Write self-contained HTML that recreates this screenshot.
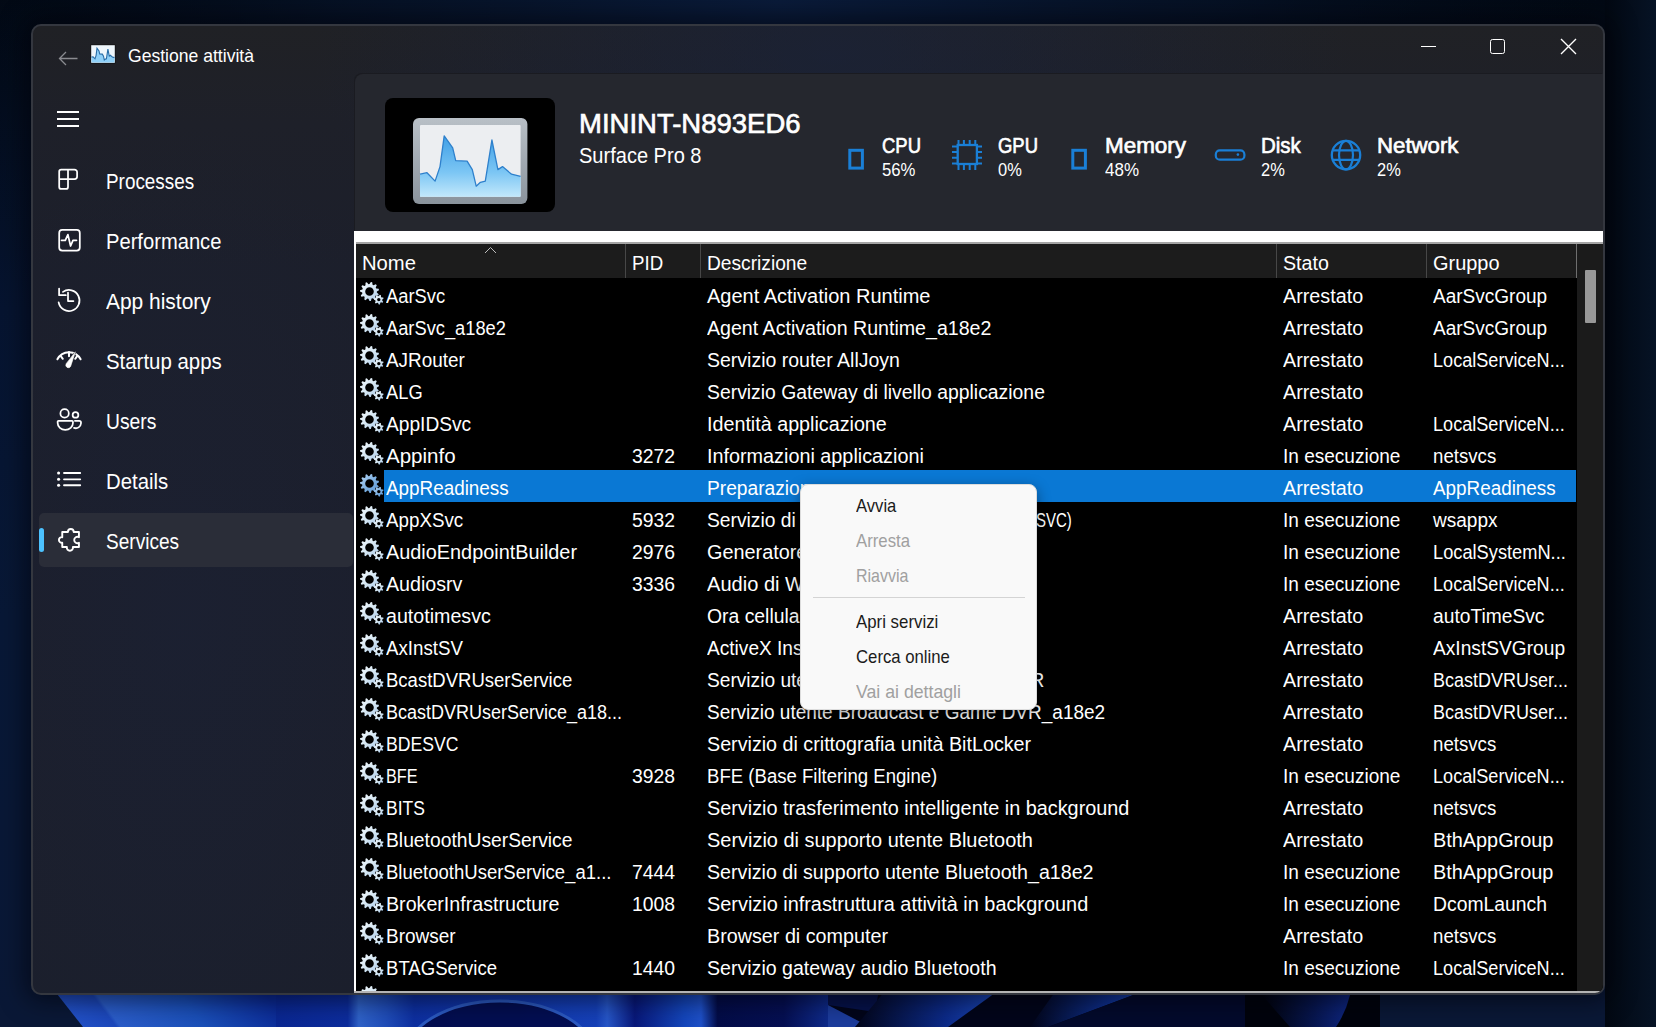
<!DOCTYPE html>
<html><head><meta charset="utf-8">
<style>
*{margin:0;padding:0;box-sizing:border-box}
html,body{width:1656px;height:1027px;overflow:hidden}
body{position:relative;font-family:"Liberation Sans",sans-serif;color:#fff;background:#040c1c}
.abs{position:absolute}
#win{position:absolute;left:31px;top:24px;width:1574px;height:971px;border-radius:10px;background:radial-gradient(ellipse 520px 260px at 800px 30px,rgba(24,34,62,.55),rgba(24,34,62,0)),radial-gradient(ellipse 260px 500px at 150px 600px,rgba(26,34,58,.35),rgba(26,34,58,0)),linear-gradient(180deg,#202125 0%,#1e2029 10%,#1c1f2b 25%,#1c1f2c 60%,#1b1f2c 100%);border:2px solid #34373f;overflow:hidden;box-shadow:0 0 24px 6px rgba(0,2,8,.55)}
#panel{position:absolute;left:322px;top:48px;width:1248px;height:919px;background:#25272e;border-top-left-radius:8px;box-shadow:-1px -1px 0 #1a1b21}
.t{position:absolute;white-space:nowrap;line-height:1}
.sb{-webkit-text-stroke:0.65px #fff}
#list{position:absolute;left:354px;top:231px;width:1249px;height:762px;background:#000;overflow:hidden;border-bottom-right-radius:8px}
#list .wbar{position:absolute;left:0;top:0;width:1249px;height:11px;background:#fff}
#list .lbar{position:absolute;left:0;top:0;width:2px;height:762px;background:#fff}
#list .bbar{position:absolute;left:0;top:760px;width:1249px;height:2px;background:#b4b4b4}
#hdr{position:absolute;left:2px;top:13px;width:1220px;height:34px;background:#1c1c1c}
.hc{position:absolute;top:9px;font-size:20px;line-height:1;color:#fff;white-space:nowrap;transform-origin:0 0}
.sep{position:absolute;top:0;width:1px;height:34px;background:#474747}
.row{position:absolute;left:0;width:1222px;height:32px}
.row .c{position:absolute;top:8px;font-size:20px;line-height:1;color:#fff;white-space:nowrap;transform-origin:0 0}
.row .g{position:absolute;left:6px;top:4px}
.selbg{position:absolute;left:30px;top:0;width:1192px;height:32px;background:#0a78d4}
#sb{position:absolute;left:1223px;top:13px;width:26px;height:747px;background:#1b1b1b}
#thumb{position:absolute;left:8px;top:26px;width:11px;height:53px;background:#989898;border-radius:1px}
#menu{position:absolute;left:800px;top:484px;width:237px;height:226px;background:#f9f9f9;border-radius:8px;border:1px solid #dcdcdc;box-shadow:0 4px 14px rgba(0,0,0,.4)}
.t.mi{color:#1b1b1b}
.t.mi.dis{color:#a0a0a0}
</style></head><body>
<svg width="0" height="0" style="position:absolute"><defs>
<linearGradient id="gg" x1="0" y1="0" x2="1" y2="1"><stop offset="0" stop-color="#f4f9fc"/><stop offset=".55" stop-color="#d2e5f2"/><stop offset="1" stop-color="#a8c8ea"/></linearGradient>
<linearGradient id="gs" x1="0" y1="0" x2="1" y2="1"><stop offset="0" stop-color="#b7d6f2"/><stop offset=".55" stop-color="#7aaee0"/><stop offset="1" stop-color="#5a96d6"/></linearGradient>
<linearGradient id="cf" x1="0" y1="0" x2="0" y2="1"><stop offset="0" stop-color="#3f9fe6"/><stop offset=".6" stop-color="#7cc6f4"/><stop offset="1" stop-color="#c2e8fb"/></linearGradient>
<linearGradient id="fr" x1="0" y1="0" x2="0" y2="1"><stop offset="0" stop-color="#b9c0c7"/><stop offset="1" stop-color="#8a939c"/></linearGradient>
</defs></svg>
<!-- desktop background -->
<svg class="abs" style="left:0;top:0" width="1656" height="1027" viewBox="0 0 1656 1027">
 <defs>
  <linearGradient id="bgv" x1="0" y1="0" x2="0" y2="1027" gradientUnits="userSpaceOnUse"><stop offset="0" stop-color="#020914"/><stop offset=".3" stop-color="#061430"/><stop offset=".6" stop-color="#081836"/><stop offset="1" stop-color="#0a1836"/></linearGradient>
  <radialGradient id="topg" cx="780" cy="0" r="820" gradientUnits="userSpaceOnUse"><stop offset="0" stop-color="#0a1b3a" stop-opacity="1"/><stop offset=".55" stop-color="#07142b" stop-opacity=".7"/><stop offset="1" stop-color="#040c1c" stop-opacity="0"/></radialGradient>
  <linearGradient id="rightg" x1="1605" y1="0" x2="1656" y2="0" gradientUnits="userSpaceOnUse"><stop offset="0" stop-color="#020812"/><stop offset="1" stop-color="#061325"/></linearGradient>
  <linearGradient id="bA" x1="57" y1="0" x2="276" y2="0" gradientUnits="userSpaceOnUse" gradientTransform="translate(0,1006) skewX(37) translate(0,-1006)">
   <stop offset="0" stop-color="#2352c8"/><stop offset=".2" stop-color="#1c48bc"/><stop offset=".22" stop-color="#2a5cc8"/><stop offset=".6" stop-color="#1a4fb8"/><stop offset="1" stop-color="#0b2a96"/>
  </linearGradient>
  <linearGradient id="bB" x1="276" y1="0" x2="828" y2="0" gradientUnits="userSpaceOnUse">
   <stop offset="0" stop-color="#0a2792"/><stop offset=".13" stop-color="#0c2c9c"/><stop offset=".15" stop-color="#2f62c8"/><stop offset=".2" stop-color="#1f4cb8"/><stop offset=".25" stop-color="#0d2fa0"/>
   <stop offset=".58" stop-color="#1540b8"/><stop offset=".6" stop-color="#2656c8"/><stop offset=".65" stop-color="#08187a"/><stop offset=".74" stop-color="#1446bc"/><stop offset=".77" stop-color="#1e50c8"/>
   <stop offset=".8" stop-color="#030c48"/><stop offset=".92" stop-color="#050f52"/><stop offset="1" stop-color="#0e2a8a"/>
  </linearGradient>
  <linearGradient id="bC" x1="828" y1="0" x2="1380" y2="0" gradientUnits="userSpaceOnUse" gradientTransform="translate(0,1006) skewX(-50) translate(0,-1006)">
   <stop offset="0" stop-color="#0a2a90"/><stop offset=".06" stop-color="#01030e"/><stop offset=".2" stop-color="#000208"/><stop offset=".27" stop-color="#1c48c0"/><stop offset=".31" stop-color="#000208"/>
   <stop offset=".38" stop-color="#02061a"/><stop offset=".47" stop-color="#1a48c0"/><stop offset=".55" stop-color="#0f3098"/><stop offset=".62" stop-color="#030a30"/><stop offset=".75" stop-color="#000208"/>
   <stop offset=".84" stop-color="#0f2a90"/><stop offset=".93" stop-color="#000206"/><stop offset="1" stop-color="#02060e"/>
  </linearGradient>
 <linearGradient id="bBand" x1="0" y1="0" x2="1" y2="0"><stop offset="0" stop-color="#02051a"/><stop offset=".6" stop-color="#0c2a88"/><stop offset="1" stop-color="#1e4ec4"/></linearGradient>
  <linearGradient id="bBand2" x1="0" y1="0" x2="1" y2="0"><stop offset="0" stop-color="#02051a"/><stop offset=".6" stop-color="#0e3090"/><stop offset="1" stop-color="#2252c0"/></linearGradient>
  <radialGradient id="bBlob" cx=".3" cy=".6" r=".75"><stop offset="0" stop-color="#01030c"/><stop offset=".6" stop-color="#0a1f70"/><stop offset=".9" stop-color="#102c90"/><stop offset="1" stop-color="#01030c" stop-opacity="0"/></radialGradient>
  <linearGradient id="bBlob2" x1="0" y1="0" x2="1" y2="0"><stop offset="0" stop-color="#01030c"/><stop offset=".6" stop-color="#071650"/><stop offset="1" stop-color="#0e2680"/></linearGradient>
 </defs>
 <rect x="0" y="0" width="1656" height="1027" fill="url(#bgv)"/>
 <rect x="0" y="0" width="1656" height="1027" fill="url(#topg)"/>
 <rect x="1605" y="0" width="51" height="1027" fill="url(#rightg)"/>
 <polygon points="50,985 276,985 276,1027 83,1027" fill="url(#bA)"/>
 <rect x="276" y="985" width="552" height="42" fill="url(#bB)"/>
 <ellipse cx="500" cy="1060" rx="97" ry="59" fill="#020a48" stroke="#2f5ec4" stroke-width="3" opacity=".9"/>
 <rect x="828" y="985" width="552" height="42" fill="#02051a"/>
 <polygon points="828,985 880,985 875,1012 828,1005" fill="#06124a"/>
 <polygon points="828,1005 870,1027 828,1027" fill="#1c3c9c"/>
 <polygon points="890,985 1006,985 948,1027 855,1027" fill="url(#bBand)"/>
 <polygon points="1060,985 1160,985 1048,1027 1030,1027" fill="url(#bBand2)"/>
 <polygon points="1160,985 1245,985 1245,1027 1048,1027" fill="#030a2c"/>
 <polygon points="1245,985 1380,985 1380,1027 1245,1027" fill="#01030c"/>
 <path d="M1262,995 L1350,995 Q1346,1012 1336,1027 L1290,1027 Z" fill="url(#bBlob2)"/>
</svg>
<div id="win">
  <div id="panel"></div>
</div>
<!-- title bar -->
<svg class="abs" style="left:58px;top:50px" width="20" height="17" viewBox="0 0 20 17"><path d="M19.5,8.5 H1.5 M8,2 L1.5,8.5 L8,15" fill="none" stroke="#8a8b90" stroke-width="1.3"/></svg>
<svg class="abs" style="left:90px;top:44px" width="26" height="20" viewBox="0 0 26 20"><rect x="0.5" y="0.5" width="25" height="19" fill="#111"/><rect x="1.2" y="1.2" width="23.6" height="17.6" fill="#eef6fc"/><g transform="translate(1.5,1.5)"><path d="M0.0,11.6 L1.6,11.3 L3.5,13.3 L4.6,9.8 L5.5,2.6 L7.5,5.4 L8.2,8.4 L10.8,8.6 L12.0,10.6 L12.8,14.5 L13.8,13.6 L14.9,13.3 L16.4,3.6 L17.8,10.6 L18.9,9.8 L20.9,11.6 L23.0,12.1 L23.0,17 L0.0,17Z" fill="#8fd0f8"/><path d="M0.0,11.6 L1.6,11.3 L3.5,13.3 L4.6,9.8 L5.5,2.6 L7.5,5.4 L8.2,8.4 L10.8,8.6 L12.0,10.6 L12.8,14.5 L13.8,13.6 L14.9,13.3 L16.4,3.6 L17.8,10.6 L18.9,9.8 L20.9,11.6 L23.0,12.1" fill="none" stroke="#2a6ea8" stroke-width="1.1"/></g></svg>
<div class="t " style="left:127.5px;top:46.75px;font-size:18.60px;transform:scaleX(0.945);transform-origin:0 0;">Gestione attività</div>
<div class="abs" style="left:1421px;top:46px;width:15px;height:1px;background:#fff"></div>
<div class="abs" style="left:1490px;top:39px;width:15px;height:15px;border:1.4px solid #fff;border-radius:2.5px"></div>
<svg class="abs" style="left:1560px;top:38px" width="17" height="17" viewBox="0 0 17 17"><path d="M1,1 L16,16 M16,1 L1,16" stroke="#fff" stroke-width="1.35"/></svg>
<!-- hamburger -->
<div class="abs" style="left:57px;top:111px;width:22px;height:1.6px;background:#fff"></div>
<div class="abs" style="left:57px;top:118px;width:22px;height:1.6px;background:#fff"></div>
<div class="abs" style="left:57px;top:125px;width:22px;height:1.6px;background:#fff"></div>
<!-- nav -->
<div class="abs" style="left:39px;top:513px;width:314px;height:54px;background:#2a2d38;border-radius:5px"></div>
<div class="abs" style="left:39px;top:528px;width:5px;height:24px;background:#4cc2ff;border-radius:3px"></div>
<svg class="abs" style="left:54px;top:165px" width="30" height="400" viewBox="0 0 30 400" fill="none" stroke="#fff" stroke-width="1.75" stroke-linejoin="round" stroke-linecap="round">
 <path d="M5.2,14 V6.6 a2,2 0 0 1 2,-2 H20.5 a2.6,2.6 0 0 1 2.6,2.6 V11.4 a2.6,2.6 0 0 1 -2.6,2.6 H14 V21.9 a2,2 0 0 1 -2,2 H7.2 a2,2 0 0 1 -2,-2 Z M5.2,14 H14 M14,4.6 V14"/>
 <rect x="5.2" y="64.9" width="20.6" height="20.6" rx="3"/>
 <path d="M7.5,75.3 H11.3 L13.9,69.6 L16.6,81 L19,75.3 H22.5"/>
 <path d="M8.98,126.9 A10.5,10.5 0 1 1 4.66,137.3"/>
 <path d="M5.1,123.6 V130.2 H11.8"/>
 <path d="M14,127.7 V136 H19.4"/>
 <path d="M3.4,194.3 A13,13 0 0 1 26.6,194.3" stroke-width="2"/>
 <path d="M6.8,191.2 L8.8,193.8 M15,187 V191.2 M23.2,191.2 L21.2,193.8" stroke-width="2"/>
 <path d="M21.2,187.2 L16.6,201.5 A2.6,2.6 0 0 1 12.0,199.1 Z" fill="#fff" stroke="#1f2027" stroke-width="1.6"/>
 <path d="M21.2,187.2 L16.6,201.5 A2.6,2.6 0 0 1 12.0,199.1 Z" fill="#fff" stroke="#fff" stroke-width="0.6"/>
 <circle cx="10.6" cy="248.4" r="4.2"/>
 <circle cx="21.5" cy="249.9" r="2.85"/>
 <path d="M4.5,255.85 H18.1 a0.85,0.85 0 0 1 0.85,0.85 V258 a7.65,6.85 0 0 1 -15.3,0 V256.7 a0.85,0.85 0 0 1 0.85,-0.85 Z"/>
 <path d="M20.9,255.85 H25.3 a1.7,1.7 0 0 1 1.7,1.7 V258.3 a5.2,5.2 0 0 1 -7,4.6"/>
 <path d="M10,308 H26.2 M10,314.3 H26.2 M10,320.2 H26.2" stroke-width="1.85"/>
 <circle cx="4.6" cy="308" r="1.55" fill="#fff" stroke="none"/><circle cx="4.6" cy="314.3" r="1.55" fill="#fff" stroke="none"/><circle cx="4.6" cy="320.2" r="1.55" fill="#fff" stroke="none"/>
 <path d="M8.25,366.95 H13.9 A2.9,2.9 0 1 1 19.7,366.95 H24.95 V372.2 A3.2,3.2 0 1 0 24.95,377.8 V382.05 H18.9 A3.07,3.07 0 1 1 12.9,382.05 H8.25 V377.7 A2.8,2.8 0 1 1 8.25,372.2 Z" stroke-width="1.9"/>
</svg>
<div class="t " style="left:105.5px;top:171.06px;font-size:22.31px;transform:scaleX(0.847);transform-origin:0 0;">Processes</div><div class="t " style="left:105.5px;top:231.06px;font-size:22.31px;transform:scaleX(0.904);transform-origin:0 0;">Performance</div><div class="t " style="left:105.5px;top:291.06px;font-size:22.31px;transform:scaleX(0.939);transform-origin:0 0;">App history</div><div class="t " style="left:105.5px;top:351.06px;font-size:22.31px;transform:scaleX(0.915);transform-origin:0 0;">Startup apps</div><div class="t " style="left:105.5px;top:411.06px;font-size:22.31px;transform:scaleX(0.865);transform-origin:0 0;">Users</div><div class="t " style="left:105.5px;top:471.06px;font-size:22.31px;transform:scaleX(0.912);transform-origin:0 0;">Details</div><div class="t " style="left:105.5px;top:531.06px;font-size:22.31px;transform:scaleX(0.854);transform-origin:0 0;">Services</div>
<!-- header -->
<div class="abs" style="left:385px;top:98px;width:170px;height:114px;background:#000;border-radius:8px"></div>
<svg class="abs" style="left:412px;top:117px" width="116" height="88" viewBox="412 117 116 88">
 <rect x="413" y="118" width="114.4" height="86" rx="6" fill="url(#fr)"/>
 <rect x="420" y="125" width="100.6" height="71.8" rx="1" fill="#eceef1"/>
 <g transform="translate(420,125)"><path d="M0.0,49.2 L7.0,47.7 L15.1,56.1 L20.0,41.6 L24.2,10.8 L32.7,22.9 L35.7,35.6 L47.1,36.2 L52.3,44.6 L56.2,61.2 L60.4,57.3 L65.3,56.1 L71.9,15.0 L77.9,44.6 L82.5,41.6 L91.5,49.2 L100.6,51.3 L100.6,71.8 L0.0,71.8Z" fill="url(#cf)"/><path d="M0.0,49.2 L7.0,47.7 L15.1,56.1 L20.0,41.6 L24.2,10.8 L32.7,22.9 L35.7,35.6 L47.1,36.2 L52.3,44.6 L56.2,61.2 L60.4,57.3 L65.3,56.1 L71.9,15.0 L77.9,44.6 L82.5,41.6 L91.5,49.2 L100.6,51.3" fill="none" stroke="#2e80cc" stroke-width="1.3" stroke-linejoin="round"/></g>
</svg>
<div class="t sb" style="left:578.5px;top:110.47px;font-size:27.33px;transform:scaleX(1.006);transform-origin:0 0;">MININT-N893ED6</div><div class="t " style="left:578.5px;top:145.81px;font-size:21.37px;transform:scaleX(0.938);transform-origin:0 0;">Surface Pro 8</div><div class="t sb" style="left:881.5px;top:134.74px;font-size:21.80px;transform:scaleX(0.847);transform-origin:0 0;">CPU</div><div class="t " style="left:881.5px;top:161.71px;font-size:17.59px;transform:scaleX(0.952);transform-origin:0 0;">56%</div><div class="t sb" style="left:997.5px;top:134.74px;font-size:21.80px;transform:scaleX(0.847);transform-origin:0 0;">GPU</div><div class="t " style="left:997.5px;top:161.71px;font-size:17.59px;transform:scaleX(0.937);transform-origin:0 0;">0%</div><div class="t sb" style="left:1104.5px;top:134.74px;font-size:21.80px;transform:scaleX(1.029);transform-origin:0 0;">Memory</div><div class="t " style="left:1104.5px;top:161.71px;font-size:17.59px;transform:scaleX(0.966);transform-origin:0 0;">48%</div><div class="t sb" style="left:1261px;top:134.74px;font-size:21.80px;transform:scaleX(0.939);transform-origin:0 0;">Disk</div><div class="t " style="left:1261px;top:161.71px;font-size:17.59px;transform:scaleX(0.937);transform-origin:0 0;">2%</div><div class="t sb" style="left:1376.5px;top:134.74px;font-size:21.80px;transform:scaleX(1.019);transform-origin:0 0;">Network</div><div class="t " style="left:1376.5px;top:161.71px;font-size:17.59px;transform:scaleX(0.937);transform-origin:0 0;">2%</div>
<svg class="abs" style="left:840px;top:130px" width="530" height="50" viewBox="840 130 530 50" fill="none" stroke="#1a7fd6">
 <rect x="849.8" y="150.3" width="12.6" height="17.8" stroke-width="3"/>
 <rect x="1072.8" y="150.3" width="12.6" height="17.8" stroke-width="3"/>
 <rect x="957.7" y="145" width="19.2" height="19" stroke-width="2.3"/>
 <path d="M958.5,140 V145 M963.9,140 V145 M969.7,140 V145 M975.3,140 V145 M958.5,164 V170 M963.9,164 V170 M969.7,164 V170 M975.3,164 V170 M952,146.6 H957.7 M952,151.9 H957.7 M952,157.8 H957.7 M952,163.4 H957.7 M976.9,146.6 H982 M976.9,151.9 H982 M976.9,157.8 H982 M976.9,163.4 H982" stroke-width="2"/>
 <rect x="1215.8" y="150.4" width="28.6" height="9.3" rx="4" stroke-width="2.2"/>
 <circle cx="1237.9" cy="154.6" r="1.3" fill="#1a7fd6" stroke="none"/>
 <circle cx="1346" cy="155.1" r="14.2" stroke-width="2.3"/>
 <ellipse cx="1346" cy="155.1" rx="7" ry="14.2" stroke-width="2.2"/>
 <path d="M1332,150.4 H1360 M1332,159.9 H1360" stroke-width="2.2"/>
</svg>
<!-- list -->
<div id="list">
  <div class="wbar"></div>
  <div class="abs" style="left:0;top:11px;width:1249px;height:2px;background:#a4a4a4"></div>
  <div id="hdr">
    <div class="hc" style="left:6px;transform:scaleX(1.012)">Nome</div>
    <div class="sep" style="left:269px"></div>
    <div class="hc" style="left:276px;transform:scaleX(0.935)">PID</div>
    <div class="sep" style="left:344px"></div>
    <div class="hc" style="left:351px;transform:scaleX(0.959)">Descrizione</div>
    <div class="sep" style="left:920px"></div>
    <div class="hc" style="left:927px;transform:scaleX(0.981)">Stato</div>
    <div class="sep" style="left:1070px"></div>
    <div class="hc" style="left:1077px;transform:scaleX(0.997)">Gruppo</div>
    <div class="sep" style="left:1220px;background:#6e6e6e"></div>
    <svg class="abs" style="left:128px;top:1.5px" width="13" height="8" viewBox="0 0 13 8"><path d="M1,7 L6.5,1.5 L12,7" fill="none" stroke="#bdbdbd" stroke-width="1"/></svg>
  </div>
  <div class="row" style="top:47px"><svg class="g" width="26" height="26" viewBox="0 0 26 26"><path d="M9.50,2.10 L10.87,-0.00 L12.20,0.29 L12.57,2.77 L13.50,3.27 L15.79,2.24 L16.76,3.21 L15.73,5.50 L16.23,6.43 L18.71,6.80 L19.00,8.13 L16.90,9.50 L16.82,10.55 L18.71,12.20 L18.23,13.49 L15.73,13.50 L15.09,14.35 L15.79,16.76 L14.69,17.58 L12.57,16.23 L11.58,16.60 L10.87,19.00 L9.50,19.10 L8.45,16.82 L7.42,16.60 L5.51,18.23 L4.31,17.58 L4.65,15.09 L3.91,14.35 L1.42,14.69 L0.77,13.49 L2.40,11.58 L2.18,10.55 L-0.10,9.50 L-0.00,8.13 L2.40,7.42 L2.77,6.43 L1.42,4.31 L2.24,3.21 L4.65,3.91 L5.50,3.27 L5.51,0.77 L6.80,0.29 L8.45,2.18Z M13.80,9.50 A4.3,4.3 0 1 0 5.20,9.50 A4.3,4.3 0 1 0 13.80,9.50Z" fill="url(#gg)" fill-rule="evenodd"/><path d="M18.80,14.10 L19.89,12.82 L20.93,13.19 L20.98,14.86 L21.54,15.42 L23.21,15.47 L23.58,16.51 L22.30,17.60 L22.21,18.38 L23.21,19.73 L22.63,20.66 L20.98,20.34 L20.32,20.75 L19.89,22.38 L18.80,22.50 L18.02,21.01 L17.28,20.75 L15.74,21.43 L14.97,20.66 L15.65,19.12 L15.39,18.38 L13.90,17.60 L14.02,16.51 L15.65,16.08 L16.06,15.42 L15.74,13.77 L16.67,13.19 L18.02,14.19Z M20.50,17.60 A1.7,1.7 0 1 0 17.10,17.60 A1.7,1.7 0 1 0 20.50,17.60Z" fill="url(#gg)" fill-rule="evenodd"/></svg><span class="c" style="left:32px;transform:scaleX(0.918)">AarSvc</span><span class="c" style="left:353px;transform:scaleX(1.000)">Agent Activation Runtime</span><span class="c" style="left:929px;transform:scaleX(0.989)">Arrestato</span><span class="c" style="left:1079px;transform:scaleX(0.951)">AarSvcGroup</span></div><div class="row" style="top:79px"><svg class="g" width="26" height="26" viewBox="0 0 26 26"><path d="M9.50,2.10 L10.87,-0.00 L12.20,0.29 L12.57,2.77 L13.50,3.27 L15.79,2.24 L16.76,3.21 L15.73,5.50 L16.23,6.43 L18.71,6.80 L19.00,8.13 L16.90,9.50 L16.82,10.55 L18.71,12.20 L18.23,13.49 L15.73,13.50 L15.09,14.35 L15.79,16.76 L14.69,17.58 L12.57,16.23 L11.58,16.60 L10.87,19.00 L9.50,19.10 L8.45,16.82 L7.42,16.60 L5.51,18.23 L4.31,17.58 L4.65,15.09 L3.91,14.35 L1.42,14.69 L0.77,13.49 L2.40,11.58 L2.18,10.55 L-0.10,9.50 L-0.00,8.13 L2.40,7.42 L2.77,6.43 L1.42,4.31 L2.24,3.21 L4.65,3.91 L5.50,3.27 L5.51,0.77 L6.80,0.29 L8.45,2.18Z M13.80,9.50 A4.3,4.3 0 1 0 5.20,9.50 A4.3,4.3 0 1 0 13.80,9.50Z" fill="url(#gg)" fill-rule="evenodd"/><path d="M18.80,14.10 L19.89,12.82 L20.93,13.19 L20.98,14.86 L21.54,15.42 L23.21,15.47 L23.58,16.51 L22.30,17.60 L22.21,18.38 L23.21,19.73 L22.63,20.66 L20.98,20.34 L20.32,20.75 L19.89,22.38 L18.80,22.50 L18.02,21.01 L17.28,20.75 L15.74,21.43 L14.97,20.66 L15.65,19.12 L15.39,18.38 L13.90,17.60 L14.02,16.51 L15.65,16.08 L16.06,15.42 L15.74,13.77 L16.67,13.19 L18.02,14.19Z M20.50,17.60 A1.7,1.7 0 1 0 17.10,17.60 A1.7,1.7 0 1 0 20.50,17.60Z" fill="url(#gg)" fill-rule="evenodd"/></svg><span class="c" style="left:32px;transform:scaleX(0.914)">AarSvc_a18e2</span><span class="c" style="left:353px;transform:scaleX(0.980)">Agent Activation Runtime_a18e2</span><span class="c" style="left:929px;transform:scaleX(0.989)">Arrestato</span><span class="c" style="left:1079px;transform:scaleX(0.951)">AarSvcGroup</span></div><div class="row" style="top:111px"><svg class="g" width="26" height="26" viewBox="0 0 26 26"><path d="M9.50,2.10 L10.87,-0.00 L12.20,0.29 L12.57,2.77 L13.50,3.27 L15.79,2.24 L16.76,3.21 L15.73,5.50 L16.23,6.43 L18.71,6.80 L19.00,8.13 L16.90,9.50 L16.82,10.55 L18.71,12.20 L18.23,13.49 L15.73,13.50 L15.09,14.35 L15.79,16.76 L14.69,17.58 L12.57,16.23 L11.58,16.60 L10.87,19.00 L9.50,19.10 L8.45,16.82 L7.42,16.60 L5.51,18.23 L4.31,17.58 L4.65,15.09 L3.91,14.35 L1.42,14.69 L0.77,13.49 L2.40,11.58 L2.18,10.55 L-0.10,9.50 L-0.00,8.13 L2.40,7.42 L2.77,6.43 L1.42,4.31 L2.24,3.21 L4.65,3.91 L5.50,3.27 L5.51,0.77 L6.80,0.29 L8.45,2.18Z M13.80,9.50 A4.3,4.3 0 1 0 5.20,9.50 A4.3,4.3 0 1 0 13.80,9.50Z" fill="url(#gg)" fill-rule="evenodd"/><path d="M18.80,14.10 L19.89,12.82 L20.93,13.19 L20.98,14.86 L21.54,15.42 L23.21,15.47 L23.58,16.51 L22.30,17.60 L22.21,18.38 L23.21,19.73 L22.63,20.66 L20.98,20.34 L20.32,20.75 L19.89,22.38 L18.80,22.50 L18.02,21.01 L17.28,20.75 L15.74,21.43 L14.97,20.66 L15.65,19.12 L15.39,18.38 L13.90,17.60 L14.02,16.51 L15.65,16.08 L16.06,15.42 L15.74,13.77 L16.67,13.19 L18.02,14.19Z M20.50,17.60 A1.7,1.7 0 1 0 17.10,17.60 A1.7,1.7 0 1 0 20.50,17.60Z" fill="url(#gg)" fill-rule="evenodd"/></svg><span class="c" style="left:32px;transform:scaleX(0.944)">AJRouter</span><span class="c" style="left:353px;transform:scaleX(0.975)">Servizio router AllJoyn</span><span class="c" style="left:929px;transform:scaleX(0.989)">Arrestato</span><span class="c" style="left:1079px;transform:scaleX(0.905)">LocalServiceN...</span></div><div class="row" style="top:143px"><svg class="g" width="26" height="26" viewBox="0 0 26 26"><path d="M9.50,2.10 L10.87,-0.00 L12.20,0.29 L12.57,2.77 L13.50,3.27 L15.79,2.24 L16.76,3.21 L15.73,5.50 L16.23,6.43 L18.71,6.80 L19.00,8.13 L16.90,9.50 L16.82,10.55 L18.71,12.20 L18.23,13.49 L15.73,13.50 L15.09,14.35 L15.79,16.76 L14.69,17.58 L12.57,16.23 L11.58,16.60 L10.87,19.00 L9.50,19.10 L8.45,16.82 L7.42,16.60 L5.51,18.23 L4.31,17.58 L4.65,15.09 L3.91,14.35 L1.42,14.69 L0.77,13.49 L2.40,11.58 L2.18,10.55 L-0.10,9.50 L-0.00,8.13 L2.40,7.42 L2.77,6.43 L1.42,4.31 L2.24,3.21 L4.65,3.91 L5.50,3.27 L5.51,0.77 L6.80,0.29 L8.45,2.18Z M13.80,9.50 A4.3,4.3 0 1 0 5.20,9.50 A4.3,4.3 0 1 0 13.80,9.50Z" fill="url(#gg)" fill-rule="evenodd"/><path d="M18.80,14.10 L19.89,12.82 L20.93,13.19 L20.98,14.86 L21.54,15.42 L23.21,15.47 L23.58,16.51 L22.30,17.60 L22.21,18.38 L23.21,19.73 L22.63,20.66 L20.98,20.34 L20.32,20.75 L19.89,22.38 L18.80,22.50 L18.02,21.01 L17.28,20.75 L15.74,21.43 L14.97,20.66 L15.65,19.12 L15.39,18.38 L13.90,17.60 L14.02,16.51 L15.65,16.08 L16.06,15.42 L15.74,13.77 L16.67,13.19 L18.02,14.19Z M20.50,17.60 A1.7,1.7 0 1 0 17.10,17.60 A1.7,1.7 0 1 0 20.50,17.60Z" fill="url(#gg)" fill-rule="evenodd"/></svg><span class="c" style="left:32px;transform:scaleX(0.915)">ALG</span><span class="c" style="left:353px;transform:scaleX(0.968)">Servizio Gateway di livello applicazione</span><span class="c" style="left:929px;transform:scaleX(0.989)">Arrestato</span></div><div class="row" style="top:175px"><svg class="g" width="26" height="26" viewBox="0 0 26 26"><path d="M9.50,2.10 L10.87,-0.00 L12.20,0.29 L12.57,2.77 L13.50,3.27 L15.79,2.24 L16.76,3.21 L15.73,5.50 L16.23,6.43 L18.71,6.80 L19.00,8.13 L16.90,9.50 L16.82,10.55 L18.71,12.20 L18.23,13.49 L15.73,13.50 L15.09,14.35 L15.79,16.76 L14.69,17.58 L12.57,16.23 L11.58,16.60 L10.87,19.00 L9.50,19.10 L8.45,16.82 L7.42,16.60 L5.51,18.23 L4.31,17.58 L4.65,15.09 L3.91,14.35 L1.42,14.69 L0.77,13.49 L2.40,11.58 L2.18,10.55 L-0.10,9.50 L-0.00,8.13 L2.40,7.42 L2.77,6.43 L1.42,4.31 L2.24,3.21 L4.65,3.91 L5.50,3.27 L5.51,0.77 L6.80,0.29 L8.45,2.18Z M13.80,9.50 A4.3,4.3 0 1 0 5.20,9.50 A4.3,4.3 0 1 0 13.80,9.50Z" fill="url(#gg)" fill-rule="evenodd"/><path d="M18.80,14.10 L19.89,12.82 L20.93,13.19 L20.98,14.86 L21.54,15.42 L23.21,15.47 L23.58,16.51 L22.30,17.60 L22.21,18.38 L23.21,19.73 L22.63,20.66 L20.98,20.34 L20.32,20.75 L19.89,22.38 L18.80,22.50 L18.02,21.01 L17.28,20.75 L15.74,21.43 L14.97,20.66 L15.65,19.12 L15.39,18.38 L13.90,17.60 L14.02,16.51 L15.65,16.08 L16.06,15.42 L15.74,13.77 L16.67,13.19 L18.02,14.19Z M20.50,17.60 A1.7,1.7 0 1 0 17.10,17.60 A1.7,1.7 0 1 0 20.50,17.60Z" fill="url(#gg)" fill-rule="evenodd"/></svg><span class="c" style="left:32px;transform:scaleX(0.958)">AppIDSvc</span><span class="c" style="left:353px;transform:scaleX(0.986)">Identità applicazione</span><span class="c" style="left:929px;transform:scaleX(0.989)">Arrestato</span><span class="c" style="left:1079px;transform:scaleX(0.905)">LocalServiceN...</span></div><div class="row" style="top:207px"><svg class="g" width="26" height="26" viewBox="0 0 26 26"><path d="M9.50,2.10 L10.87,-0.00 L12.20,0.29 L12.57,2.77 L13.50,3.27 L15.79,2.24 L16.76,3.21 L15.73,5.50 L16.23,6.43 L18.71,6.80 L19.00,8.13 L16.90,9.50 L16.82,10.55 L18.71,12.20 L18.23,13.49 L15.73,13.50 L15.09,14.35 L15.79,16.76 L14.69,17.58 L12.57,16.23 L11.58,16.60 L10.87,19.00 L9.50,19.10 L8.45,16.82 L7.42,16.60 L5.51,18.23 L4.31,17.58 L4.65,15.09 L3.91,14.35 L1.42,14.69 L0.77,13.49 L2.40,11.58 L2.18,10.55 L-0.10,9.50 L-0.00,8.13 L2.40,7.42 L2.77,6.43 L1.42,4.31 L2.24,3.21 L4.65,3.91 L5.50,3.27 L5.51,0.77 L6.80,0.29 L8.45,2.18Z M13.80,9.50 A4.3,4.3 0 1 0 5.20,9.50 A4.3,4.3 0 1 0 13.80,9.50Z" fill="url(#gg)" fill-rule="evenodd"/><path d="M18.80,14.10 L19.89,12.82 L20.93,13.19 L20.98,14.86 L21.54,15.42 L23.21,15.47 L23.58,16.51 L22.30,17.60 L22.21,18.38 L23.21,19.73 L22.63,20.66 L20.98,20.34 L20.32,20.75 L19.89,22.38 L18.80,22.50 L18.02,21.01 L17.28,20.75 L15.74,21.43 L14.97,20.66 L15.65,19.12 L15.39,18.38 L13.90,17.60 L14.02,16.51 L15.65,16.08 L16.06,15.42 L15.74,13.77 L16.67,13.19 L18.02,14.19Z M20.50,17.60 A1.7,1.7 0 1 0 17.10,17.60 A1.7,1.7 0 1 0 20.50,17.60Z" fill="url(#gg)" fill-rule="evenodd"/></svg><span class="c" style="left:32px;transform:scaleX(1.025)">Appinfo</span><span class="c" style="left:278px;transform:scaleX(0.968)">3272</span><span class="c" style="left:353px;transform:scaleX(0.990)">Informazioni applicazioni</span><span class="c" style="left:929px;transform:scaleX(0.951)">In esecuzione</span><span class="c" style="left:1079px;transform:scaleX(0.933)">netsvcs</span></div><div class="row" style="top:239px"><div class="selbg"></div><svg class="g" width="26" height="26" viewBox="0 0 26 26"><path d="M9.50,2.10 L10.87,-0.00 L12.20,0.29 L12.57,2.77 L13.50,3.27 L15.79,2.24 L16.76,3.21 L15.73,5.50 L16.23,6.43 L18.71,6.80 L19.00,8.13 L16.90,9.50 L16.82,10.55 L18.71,12.20 L18.23,13.49 L15.73,13.50 L15.09,14.35 L15.79,16.76 L14.69,17.58 L12.57,16.23 L11.58,16.60 L10.87,19.00 L9.50,19.10 L8.45,16.82 L7.42,16.60 L5.51,18.23 L4.31,17.58 L4.65,15.09 L3.91,14.35 L1.42,14.69 L0.77,13.49 L2.40,11.58 L2.18,10.55 L-0.10,9.50 L-0.00,8.13 L2.40,7.42 L2.77,6.43 L1.42,4.31 L2.24,3.21 L4.65,3.91 L5.50,3.27 L5.51,0.77 L6.80,0.29 L8.45,2.18Z M13.80,9.50 A4.3,4.3 0 1 0 5.20,9.50 A4.3,4.3 0 1 0 13.80,9.50Z" fill="url(#gs)" fill-rule="evenodd"/><path d="M18.80,14.10 L19.89,12.82 L20.93,13.19 L20.98,14.86 L21.54,15.42 L23.21,15.47 L23.58,16.51 L22.30,17.60 L22.21,18.38 L23.21,19.73 L22.63,20.66 L20.98,20.34 L20.32,20.75 L19.89,22.38 L18.80,22.50 L18.02,21.01 L17.28,20.75 L15.74,21.43 L14.97,20.66 L15.65,19.12 L15.39,18.38 L13.90,17.60 L14.02,16.51 L15.65,16.08 L16.06,15.42 L15.74,13.77 L16.67,13.19 L18.02,14.19Z M20.50,17.60 A1.7,1.7 0 1 0 17.10,17.60 A1.7,1.7 0 1 0 20.50,17.60Z" fill="url(#gs)" fill-rule="evenodd"/></svg><span class="c" style="left:32px;transform:scaleX(0.943)">AppReadiness</span><span class="c" style="left:353px;transform:scaleX(0.959)">Preparazione app</span><span class="c" style="left:929px;transform:scaleX(0.989)">Arrestato</span><span class="c" style="left:1079px;transform:scaleX(0.943)">AppReadiness</span></div><div class="row" style="top:271px"><svg class="g" width="26" height="26" viewBox="0 0 26 26"><path d="M9.50,2.10 L10.87,-0.00 L12.20,0.29 L12.57,2.77 L13.50,3.27 L15.79,2.24 L16.76,3.21 L15.73,5.50 L16.23,6.43 L18.71,6.80 L19.00,8.13 L16.90,9.50 L16.82,10.55 L18.71,12.20 L18.23,13.49 L15.73,13.50 L15.09,14.35 L15.79,16.76 L14.69,17.58 L12.57,16.23 L11.58,16.60 L10.87,19.00 L9.50,19.10 L8.45,16.82 L7.42,16.60 L5.51,18.23 L4.31,17.58 L4.65,15.09 L3.91,14.35 L1.42,14.69 L0.77,13.49 L2.40,11.58 L2.18,10.55 L-0.10,9.50 L-0.00,8.13 L2.40,7.42 L2.77,6.43 L1.42,4.31 L2.24,3.21 L4.65,3.91 L5.50,3.27 L5.51,0.77 L6.80,0.29 L8.45,2.18Z M13.80,9.50 A4.3,4.3 0 1 0 5.20,9.50 A4.3,4.3 0 1 0 13.80,9.50Z" fill="url(#gg)" fill-rule="evenodd"/><path d="M18.80,14.10 L19.89,12.82 L20.93,13.19 L20.98,14.86 L21.54,15.42 L23.21,15.47 L23.58,16.51 L22.30,17.60 L22.21,18.38 L23.21,19.73 L22.63,20.66 L20.98,20.34 L20.32,20.75 L19.89,22.38 L18.80,22.50 L18.02,21.01 L17.28,20.75 L15.74,21.43 L14.97,20.66 L15.65,19.12 L15.39,18.38 L13.90,17.60 L14.02,16.51 L15.65,16.08 L16.06,15.42 L15.74,13.77 L16.67,13.19 L18.02,14.19Z M20.50,17.60 A1.7,1.7 0 1 0 17.10,17.60 A1.7,1.7 0 1 0 20.50,17.60Z" fill="url(#gg)" fill-rule="evenodd"/></svg><span class="c" style="left:32px;transform:scaleX(0.938)">AppXSvc</span><span class="c" style="left:278px;transform:scaleX(0.968)">5932</span><span class="c" style="left:353px;transform:scaleX(0.962)">Servizio di</span><span class="c" style="left:681.5px;transform:scaleX(0.75)">SVC)</span><span class="c" style="left:929px;transform:scaleX(0.951)">In esecuzione</span><span class="c" style="left:1079px;transform:scaleX(0.952)">wsappx</span></div><div class="row" style="top:303px"><svg class="g" width="26" height="26" viewBox="0 0 26 26"><path d="M9.50,2.10 L10.87,-0.00 L12.20,0.29 L12.57,2.77 L13.50,3.27 L15.79,2.24 L16.76,3.21 L15.73,5.50 L16.23,6.43 L18.71,6.80 L19.00,8.13 L16.90,9.50 L16.82,10.55 L18.71,12.20 L18.23,13.49 L15.73,13.50 L15.09,14.35 L15.79,16.76 L14.69,17.58 L12.57,16.23 L11.58,16.60 L10.87,19.00 L9.50,19.10 L8.45,16.82 L7.42,16.60 L5.51,18.23 L4.31,17.58 L4.65,15.09 L3.91,14.35 L1.42,14.69 L0.77,13.49 L2.40,11.58 L2.18,10.55 L-0.10,9.50 L-0.00,8.13 L2.40,7.42 L2.77,6.43 L1.42,4.31 L2.24,3.21 L4.65,3.91 L5.50,3.27 L5.51,0.77 L6.80,0.29 L8.45,2.18Z M13.80,9.50 A4.3,4.3 0 1 0 5.20,9.50 A4.3,4.3 0 1 0 13.80,9.50Z" fill="url(#gg)" fill-rule="evenodd"/><path d="M18.80,14.10 L19.89,12.82 L20.93,13.19 L20.98,14.86 L21.54,15.42 L23.21,15.47 L23.58,16.51 L22.30,17.60 L22.21,18.38 L23.21,19.73 L22.63,20.66 L20.98,20.34 L20.32,20.75 L19.89,22.38 L18.80,22.50 L18.02,21.01 L17.28,20.75 L15.74,21.43 L14.97,20.66 L15.65,19.12 L15.39,18.38 L13.90,17.60 L14.02,16.51 L15.65,16.08 L16.06,15.42 L15.74,13.77 L16.67,13.19 L18.02,14.19Z M20.50,17.60 A1.7,1.7 0 1 0 17.10,17.60 A1.7,1.7 0 1 0 20.50,17.60Z" fill="url(#gg)" fill-rule="evenodd"/></svg><span class="c" style="left:32px;transform:scaleX(0.993)">AudioEndpointBuilder</span><span class="c" style="left:278px;transform:scaleX(0.968)">2976</span><span class="c" style="left:353px;transform:scaleX(0.992)">Generatore endpoint audio Windows</span><span class="c" style="left:929px;transform:scaleX(0.951)">In esecuzione</span><span class="c" style="left:1079px;transform:scaleX(0.912)">LocalSystemN...</span></div><div class="row" style="top:335px"><svg class="g" width="26" height="26" viewBox="0 0 26 26"><path d="M9.50,2.10 L10.87,-0.00 L12.20,0.29 L12.57,2.77 L13.50,3.27 L15.79,2.24 L16.76,3.21 L15.73,5.50 L16.23,6.43 L18.71,6.80 L19.00,8.13 L16.90,9.50 L16.82,10.55 L18.71,12.20 L18.23,13.49 L15.73,13.50 L15.09,14.35 L15.79,16.76 L14.69,17.58 L12.57,16.23 L11.58,16.60 L10.87,19.00 L9.50,19.10 L8.45,16.82 L7.42,16.60 L5.51,18.23 L4.31,17.58 L4.65,15.09 L3.91,14.35 L1.42,14.69 L0.77,13.49 L2.40,11.58 L2.18,10.55 L-0.10,9.50 L-0.00,8.13 L2.40,7.42 L2.77,6.43 L1.42,4.31 L2.24,3.21 L4.65,3.91 L5.50,3.27 L5.51,0.77 L6.80,0.29 L8.45,2.18Z M13.80,9.50 A4.3,4.3 0 1 0 5.20,9.50 A4.3,4.3 0 1 0 13.80,9.50Z" fill="url(#gg)" fill-rule="evenodd"/><path d="M18.80,14.10 L19.89,12.82 L20.93,13.19 L20.98,14.86 L21.54,15.42 L23.21,15.47 L23.58,16.51 L22.30,17.60 L22.21,18.38 L23.21,19.73 L22.63,20.66 L20.98,20.34 L20.32,20.75 L19.89,22.38 L18.80,22.50 L18.02,21.01 L17.28,20.75 L15.74,21.43 L14.97,20.66 L15.65,19.12 L15.39,18.38 L13.90,17.60 L14.02,16.51 L15.65,16.08 L16.06,15.42 L15.74,13.77 L16.67,13.19 L18.02,14.19Z M20.50,17.60 A1.7,1.7 0 1 0 17.10,17.60 A1.7,1.7 0 1 0 20.50,17.60Z" fill="url(#gg)" fill-rule="evenodd"/></svg><span class="c" style="left:32px;transform:scaleX(0.982)">Audiosrv</span><span class="c" style="left:278px;transform:scaleX(0.968)">3336</span><span class="c" style="left:353px;transform:scaleX(1.003)">Audio di Windows</span><span class="c" style="left:929px;transform:scaleX(0.951)">In esecuzione</span><span class="c" style="left:1079px;transform:scaleX(0.905)">LocalServiceN...</span></div><div class="row" style="top:367px"><svg class="g" width="26" height="26" viewBox="0 0 26 26"><path d="M9.50,2.10 L10.87,-0.00 L12.20,0.29 L12.57,2.77 L13.50,3.27 L15.79,2.24 L16.76,3.21 L15.73,5.50 L16.23,6.43 L18.71,6.80 L19.00,8.13 L16.90,9.50 L16.82,10.55 L18.71,12.20 L18.23,13.49 L15.73,13.50 L15.09,14.35 L15.79,16.76 L14.69,17.58 L12.57,16.23 L11.58,16.60 L10.87,19.00 L9.50,19.10 L8.45,16.82 L7.42,16.60 L5.51,18.23 L4.31,17.58 L4.65,15.09 L3.91,14.35 L1.42,14.69 L0.77,13.49 L2.40,11.58 L2.18,10.55 L-0.10,9.50 L-0.00,8.13 L2.40,7.42 L2.77,6.43 L1.42,4.31 L2.24,3.21 L4.65,3.91 L5.50,3.27 L5.51,0.77 L6.80,0.29 L8.45,2.18Z M13.80,9.50 A4.3,4.3 0 1 0 5.20,9.50 A4.3,4.3 0 1 0 13.80,9.50Z" fill="url(#gg)" fill-rule="evenodd"/><path d="M18.80,14.10 L19.89,12.82 L20.93,13.19 L20.98,14.86 L21.54,15.42 L23.21,15.47 L23.58,16.51 L22.30,17.60 L22.21,18.38 L23.21,19.73 L22.63,20.66 L20.98,20.34 L20.32,20.75 L19.89,22.38 L18.80,22.50 L18.02,21.01 L17.28,20.75 L15.74,21.43 L14.97,20.66 L15.65,19.12 L15.39,18.38 L13.90,17.60 L14.02,16.51 L15.65,16.08 L16.06,15.42 L15.74,13.77 L16.67,13.19 L18.02,14.19Z M20.50,17.60 A1.7,1.7 0 1 0 17.10,17.60 A1.7,1.7 0 1 0 20.50,17.60Z" fill="url(#gg)" fill-rule="evenodd"/></svg><span class="c" style="left:32px;transform:scaleX(0.982)">autotimesvc</span><span class="c" style="left:353px;transform:scaleX(0.968)">Ora cellulare</span><span class="c" style="left:929px;transform:scaleX(0.989)">Arrestato</span><span class="c" style="left:1079px;transform:scaleX(0.961)">autoTimeSvc</span></div><div class="row" style="top:399px"><svg class="g" width="26" height="26" viewBox="0 0 26 26"><path d="M9.50,2.10 L10.87,-0.00 L12.20,0.29 L12.57,2.77 L13.50,3.27 L15.79,2.24 L16.76,3.21 L15.73,5.50 L16.23,6.43 L18.71,6.80 L19.00,8.13 L16.90,9.50 L16.82,10.55 L18.71,12.20 L18.23,13.49 L15.73,13.50 L15.09,14.35 L15.79,16.76 L14.69,17.58 L12.57,16.23 L11.58,16.60 L10.87,19.00 L9.50,19.10 L8.45,16.82 L7.42,16.60 L5.51,18.23 L4.31,17.58 L4.65,15.09 L3.91,14.35 L1.42,14.69 L0.77,13.49 L2.40,11.58 L2.18,10.55 L-0.10,9.50 L-0.00,8.13 L2.40,7.42 L2.77,6.43 L1.42,4.31 L2.24,3.21 L4.65,3.91 L5.50,3.27 L5.51,0.77 L6.80,0.29 L8.45,2.18Z M13.80,9.50 A4.3,4.3 0 1 0 5.20,9.50 A4.3,4.3 0 1 0 13.80,9.50Z" fill="url(#gg)" fill-rule="evenodd"/><path d="M18.80,14.10 L19.89,12.82 L20.93,13.19 L20.98,14.86 L21.54,15.42 L23.21,15.47 L23.58,16.51 L22.30,17.60 L22.21,18.38 L23.21,19.73 L22.63,20.66 L20.98,20.34 L20.32,20.75 L19.89,22.38 L18.80,22.50 L18.02,21.01 L17.28,20.75 L15.74,21.43 L14.97,20.66 L15.65,19.12 L15.39,18.38 L13.90,17.60 L14.02,16.51 L15.65,16.08 L16.06,15.42 L15.74,13.77 L16.67,13.19 L18.02,14.19Z M20.50,17.60 A1.7,1.7 0 1 0 17.10,17.60 A1.7,1.7 0 1 0 20.50,17.60Z" fill="url(#gg)" fill-rule="evenodd"/></svg><span class="c" style="left:32px;transform:scaleX(0.936)">AxInstSV</span><span class="c" style="left:353px;transform:scaleX(0.955)">ActiveX Installer (AxInstSV)</span><span class="c" style="left:929px;transform:scaleX(0.989)">Arrestato</span><span class="c" style="left:1079px;transform:scaleX(0.958)">AxInstSVGroup</span></div><div class="row" style="top:431px"><svg class="g" width="26" height="26" viewBox="0 0 26 26"><path d="M9.50,2.10 L10.87,-0.00 L12.20,0.29 L12.57,2.77 L13.50,3.27 L15.79,2.24 L16.76,3.21 L15.73,5.50 L16.23,6.43 L18.71,6.80 L19.00,8.13 L16.90,9.50 L16.82,10.55 L18.71,12.20 L18.23,13.49 L15.73,13.50 L15.09,14.35 L15.79,16.76 L14.69,17.58 L12.57,16.23 L11.58,16.60 L10.87,19.00 L9.50,19.10 L8.45,16.82 L7.42,16.60 L5.51,18.23 L4.31,17.58 L4.65,15.09 L3.91,14.35 L1.42,14.69 L0.77,13.49 L2.40,11.58 L2.18,10.55 L-0.10,9.50 L-0.00,8.13 L2.40,7.42 L2.77,6.43 L1.42,4.31 L2.24,3.21 L4.65,3.91 L5.50,3.27 L5.51,0.77 L6.80,0.29 L8.45,2.18Z M13.80,9.50 A4.3,4.3 0 1 0 5.20,9.50 A4.3,4.3 0 1 0 13.80,9.50Z" fill="url(#gg)" fill-rule="evenodd"/><path d="M18.80,14.10 L19.89,12.82 L20.93,13.19 L20.98,14.86 L21.54,15.42 L23.21,15.47 L23.58,16.51 L22.30,17.60 L22.21,18.38 L23.21,19.73 L22.63,20.66 L20.98,20.34 L20.32,20.75 L19.89,22.38 L18.80,22.50 L18.02,21.01 L17.28,20.75 L15.74,21.43 L14.97,20.66 L15.65,19.12 L15.39,18.38 L13.90,17.60 L14.02,16.51 L15.65,16.08 L16.06,15.42 L15.74,13.77 L16.67,13.19 L18.02,14.19Z M20.50,17.60 A1.7,1.7 0 1 0 17.10,17.60 A1.7,1.7 0 1 0 20.50,17.60Z" fill="url(#gg)" fill-rule="evenodd"/></svg><span class="c" style="left:32px;transform:scaleX(0.926)">BcastDVRUserService</span><span class="c" style="left:353px;transform:scaleX(0.957)">Servizio utente Broadcast e Game DVR</span><span class="c" style="left:929px;transform:scaleX(0.989)">Arrestato</span><span class="c" style="left:1079px;transform:scaleX(0.899)">BcastDVRUser...</span></div><div class="row" style="top:463px"><svg class="g" width="26" height="26" viewBox="0 0 26 26"><path d="M9.50,2.10 L10.87,-0.00 L12.20,0.29 L12.57,2.77 L13.50,3.27 L15.79,2.24 L16.76,3.21 L15.73,5.50 L16.23,6.43 L18.71,6.80 L19.00,8.13 L16.90,9.50 L16.82,10.55 L18.71,12.20 L18.23,13.49 L15.73,13.50 L15.09,14.35 L15.79,16.76 L14.69,17.58 L12.57,16.23 L11.58,16.60 L10.87,19.00 L9.50,19.10 L8.45,16.82 L7.42,16.60 L5.51,18.23 L4.31,17.58 L4.65,15.09 L3.91,14.35 L1.42,14.69 L0.77,13.49 L2.40,11.58 L2.18,10.55 L-0.10,9.50 L-0.00,8.13 L2.40,7.42 L2.77,6.43 L1.42,4.31 L2.24,3.21 L4.65,3.91 L5.50,3.27 L5.51,0.77 L6.80,0.29 L8.45,2.18Z M13.80,9.50 A4.3,4.3 0 1 0 5.20,9.50 A4.3,4.3 0 1 0 13.80,9.50Z" fill="url(#gg)" fill-rule="evenodd"/><path d="M18.80,14.10 L19.89,12.82 L20.93,13.19 L20.98,14.86 L21.54,15.42 L23.21,15.47 L23.58,16.51 L22.30,17.60 L22.21,18.38 L23.21,19.73 L22.63,20.66 L20.98,20.34 L20.32,20.75 L19.89,22.38 L18.80,22.50 L18.02,21.01 L17.28,20.75 L15.74,21.43 L14.97,20.66 L15.65,19.12 L15.39,18.38 L13.90,17.60 L14.02,16.51 L15.65,16.08 L16.06,15.42 L15.74,13.77 L16.67,13.19 L18.02,14.19Z M20.50,17.60 A1.7,1.7 0 1 0 17.10,17.60 A1.7,1.7 0 1 0 20.50,17.60Z" fill="url(#gg)" fill-rule="evenodd"/></svg><span class="c" style="left:32px;transform:scaleX(0.900)">BcastDVRUserService_a18...</span><span class="c" style="left:353px;transform:scaleX(0.950)">Servizio utente Broadcast e Game DVR_a18e2</span><span class="c" style="left:929px;transform:scaleX(0.989)">Arrestato</span><span class="c" style="left:1079px;transform:scaleX(0.899)">BcastDVRUser...</span></div><div class="row" style="top:495px"><svg class="g" width="26" height="26" viewBox="0 0 26 26"><path d="M9.50,2.10 L10.87,-0.00 L12.20,0.29 L12.57,2.77 L13.50,3.27 L15.79,2.24 L16.76,3.21 L15.73,5.50 L16.23,6.43 L18.71,6.80 L19.00,8.13 L16.90,9.50 L16.82,10.55 L18.71,12.20 L18.23,13.49 L15.73,13.50 L15.09,14.35 L15.79,16.76 L14.69,17.58 L12.57,16.23 L11.58,16.60 L10.87,19.00 L9.50,19.10 L8.45,16.82 L7.42,16.60 L5.51,18.23 L4.31,17.58 L4.65,15.09 L3.91,14.35 L1.42,14.69 L0.77,13.49 L2.40,11.58 L2.18,10.55 L-0.10,9.50 L-0.00,8.13 L2.40,7.42 L2.77,6.43 L1.42,4.31 L2.24,3.21 L4.65,3.91 L5.50,3.27 L5.51,0.77 L6.80,0.29 L8.45,2.18Z M13.80,9.50 A4.3,4.3 0 1 0 5.20,9.50 A4.3,4.3 0 1 0 13.80,9.50Z" fill="url(#gg)" fill-rule="evenodd"/><path d="M18.80,14.10 L19.89,12.82 L20.93,13.19 L20.98,14.86 L21.54,15.42 L23.21,15.47 L23.58,16.51 L22.30,17.60 L22.21,18.38 L23.21,19.73 L22.63,20.66 L20.98,20.34 L20.32,20.75 L19.89,22.38 L18.80,22.50 L18.02,21.01 L17.28,20.75 L15.74,21.43 L14.97,20.66 L15.65,19.12 L15.39,18.38 L13.90,17.60 L14.02,16.51 L15.65,16.08 L16.06,15.42 L15.74,13.77 L16.67,13.19 L18.02,14.19Z M20.50,17.60 A1.7,1.7 0 1 0 17.10,17.60 A1.7,1.7 0 1 0 20.50,17.60Z" fill="url(#gg)" fill-rule="evenodd"/></svg><span class="c" style="left:32px;transform:scaleX(0.882)">BDESVC</span><span class="c" style="left:353px;transform:scaleX(0.985)">Servizio di crittografia unità BitLocker</span><span class="c" style="left:929px;transform:scaleX(0.989)">Arrestato</span><span class="c" style="left:1079px;transform:scaleX(0.933)">netsvcs</span></div><div class="row" style="top:527px"><svg class="g" width="26" height="26" viewBox="0 0 26 26"><path d="M9.50,2.10 L10.87,-0.00 L12.20,0.29 L12.57,2.77 L13.50,3.27 L15.79,2.24 L16.76,3.21 L15.73,5.50 L16.23,6.43 L18.71,6.80 L19.00,8.13 L16.90,9.50 L16.82,10.55 L18.71,12.20 L18.23,13.49 L15.73,13.50 L15.09,14.35 L15.79,16.76 L14.69,17.58 L12.57,16.23 L11.58,16.60 L10.87,19.00 L9.50,19.10 L8.45,16.82 L7.42,16.60 L5.51,18.23 L4.31,17.58 L4.65,15.09 L3.91,14.35 L1.42,14.69 L0.77,13.49 L2.40,11.58 L2.18,10.55 L-0.10,9.50 L-0.00,8.13 L2.40,7.42 L2.77,6.43 L1.42,4.31 L2.24,3.21 L4.65,3.91 L5.50,3.27 L5.51,0.77 L6.80,0.29 L8.45,2.18Z M13.80,9.50 A4.3,4.3 0 1 0 5.20,9.50 A4.3,4.3 0 1 0 13.80,9.50Z" fill="url(#gg)" fill-rule="evenodd"/><path d="M18.80,14.10 L19.89,12.82 L20.93,13.19 L20.98,14.86 L21.54,15.42 L23.21,15.47 L23.58,16.51 L22.30,17.60 L22.21,18.38 L23.21,19.73 L22.63,20.66 L20.98,20.34 L20.32,20.75 L19.89,22.38 L18.80,22.50 L18.02,21.01 L17.28,20.75 L15.74,21.43 L14.97,20.66 L15.65,19.12 L15.39,18.38 L13.90,17.60 L14.02,16.51 L15.65,16.08 L16.06,15.42 L15.74,13.77 L16.67,13.19 L18.02,14.19Z M20.50,17.60 A1.7,1.7 0 1 0 17.10,17.60 A1.7,1.7 0 1 0 20.50,17.60Z" fill="url(#gg)" fill-rule="evenodd"/></svg><span class="c" style="left:32px;transform:scaleX(0.815)">BFE</span><span class="c" style="left:278px;transform:scaleX(0.968)">3928</span><span class="c" style="left:353px;transform:scaleX(0.929)">BFE (Base Filtering Engine)</span><span class="c" style="left:929px;transform:scaleX(0.951)">In esecuzione</span><span class="c" style="left:1079px;transform:scaleX(0.905)">LocalServiceN...</span></div><div class="row" style="top:559px"><svg class="g" width="26" height="26" viewBox="0 0 26 26"><path d="M9.50,2.10 L10.87,-0.00 L12.20,0.29 L12.57,2.77 L13.50,3.27 L15.79,2.24 L16.76,3.21 L15.73,5.50 L16.23,6.43 L18.71,6.80 L19.00,8.13 L16.90,9.50 L16.82,10.55 L18.71,12.20 L18.23,13.49 L15.73,13.50 L15.09,14.35 L15.79,16.76 L14.69,17.58 L12.57,16.23 L11.58,16.60 L10.87,19.00 L9.50,19.10 L8.45,16.82 L7.42,16.60 L5.51,18.23 L4.31,17.58 L4.65,15.09 L3.91,14.35 L1.42,14.69 L0.77,13.49 L2.40,11.58 L2.18,10.55 L-0.10,9.50 L-0.00,8.13 L2.40,7.42 L2.77,6.43 L1.42,4.31 L2.24,3.21 L4.65,3.91 L5.50,3.27 L5.51,0.77 L6.80,0.29 L8.45,2.18Z M13.80,9.50 A4.3,4.3 0 1 0 5.20,9.50 A4.3,4.3 0 1 0 13.80,9.50Z" fill="url(#gg)" fill-rule="evenodd"/><path d="M18.80,14.10 L19.89,12.82 L20.93,13.19 L20.98,14.86 L21.54,15.42 L23.21,15.47 L23.58,16.51 L22.30,17.60 L22.21,18.38 L23.21,19.73 L22.63,20.66 L20.98,20.34 L20.32,20.75 L19.89,22.38 L18.80,22.50 L18.02,21.01 L17.28,20.75 L15.74,21.43 L14.97,20.66 L15.65,19.12 L15.39,18.38 L13.90,17.60 L14.02,16.51 L15.65,16.08 L16.06,15.42 L15.74,13.77 L16.67,13.19 L18.02,14.19Z M20.50,17.60 A1.7,1.7 0 1 0 17.10,17.60 A1.7,1.7 0 1 0 20.50,17.60Z" fill="url(#gg)" fill-rule="evenodd"/></svg><span class="c" style="left:32px;transform:scaleX(0.874)">BITS</span><span class="c" style="left:353px;transform:scaleX(0.992)">Servizio trasferimento intelligente in background</span><span class="c" style="left:929px;transform:scaleX(0.989)">Arrestato</span><span class="c" style="left:1079px;transform:scaleX(0.933)">netsvcs</span></div><div class="row" style="top:591px"><svg class="g" width="26" height="26" viewBox="0 0 26 26"><path d="M9.50,2.10 L10.87,-0.00 L12.20,0.29 L12.57,2.77 L13.50,3.27 L15.79,2.24 L16.76,3.21 L15.73,5.50 L16.23,6.43 L18.71,6.80 L19.00,8.13 L16.90,9.50 L16.82,10.55 L18.71,12.20 L18.23,13.49 L15.73,13.50 L15.09,14.35 L15.79,16.76 L14.69,17.58 L12.57,16.23 L11.58,16.60 L10.87,19.00 L9.50,19.10 L8.45,16.82 L7.42,16.60 L5.51,18.23 L4.31,17.58 L4.65,15.09 L3.91,14.35 L1.42,14.69 L0.77,13.49 L2.40,11.58 L2.18,10.55 L-0.10,9.50 L-0.00,8.13 L2.40,7.42 L2.77,6.43 L1.42,4.31 L2.24,3.21 L4.65,3.91 L5.50,3.27 L5.51,0.77 L6.80,0.29 L8.45,2.18Z M13.80,9.50 A4.3,4.3 0 1 0 5.20,9.50 A4.3,4.3 0 1 0 13.80,9.50Z" fill="url(#gg)" fill-rule="evenodd"/><path d="M18.80,14.10 L19.89,12.82 L20.93,13.19 L20.98,14.86 L21.54,15.42 L23.21,15.47 L23.58,16.51 L22.30,17.60 L22.21,18.38 L23.21,19.73 L22.63,20.66 L20.98,20.34 L20.32,20.75 L19.89,22.38 L18.80,22.50 L18.02,21.01 L17.28,20.75 L15.74,21.43 L14.97,20.66 L15.65,19.12 L15.39,18.38 L13.90,17.60 L14.02,16.51 L15.65,16.08 L16.06,15.42 L15.74,13.77 L16.67,13.19 L18.02,14.19Z M20.50,17.60 A1.7,1.7 0 1 0 17.10,17.60 A1.7,1.7 0 1 0 20.50,17.60Z" fill="url(#gg)" fill-rule="evenodd"/></svg><span class="c" style="left:32px;transform:scaleX(0.964)">BluetoothUserService</span><span class="c" style="left:353px;transform:scaleX(0.997)">Servizio di supporto utente Bluetooth</span><span class="c" style="left:929px;transform:scaleX(0.989)">Arrestato</span><span class="c" style="left:1079px;transform:scaleX(0.993)">BthAppGroup</span></div><div class="row" style="top:623px"><svg class="g" width="26" height="26" viewBox="0 0 26 26"><path d="M9.50,2.10 L10.87,-0.00 L12.20,0.29 L12.57,2.77 L13.50,3.27 L15.79,2.24 L16.76,3.21 L15.73,5.50 L16.23,6.43 L18.71,6.80 L19.00,8.13 L16.90,9.50 L16.82,10.55 L18.71,12.20 L18.23,13.49 L15.73,13.50 L15.09,14.35 L15.79,16.76 L14.69,17.58 L12.57,16.23 L11.58,16.60 L10.87,19.00 L9.50,19.10 L8.45,16.82 L7.42,16.60 L5.51,18.23 L4.31,17.58 L4.65,15.09 L3.91,14.35 L1.42,14.69 L0.77,13.49 L2.40,11.58 L2.18,10.55 L-0.10,9.50 L-0.00,8.13 L2.40,7.42 L2.77,6.43 L1.42,4.31 L2.24,3.21 L4.65,3.91 L5.50,3.27 L5.51,0.77 L6.80,0.29 L8.45,2.18Z M13.80,9.50 A4.3,4.3 0 1 0 5.20,9.50 A4.3,4.3 0 1 0 13.80,9.50Z" fill="url(#gg)" fill-rule="evenodd"/><path d="M18.80,14.10 L19.89,12.82 L20.93,13.19 L20.98,14.86 L21.54,15.42 L23.21,15.47 L23.58,16.51 L22.30,17.60 L22.21,18.38 L23.21,19.73 L22.63,20.66 L20.98,20.34 L20.32,20.75 L19.89,22.38 L18.80,22.50 L18.02,21.01 L17.28,20.75 L15.74,21.43 L14.97,20.66 L15.65,19.12 L15.39,18.38 L13.90,17.60 L14.02,16.51 L15.65,16.08 L16.06,15.42 L15.74,13.77 L16.67,13.19 L18.02,14.19Z M20.50,17.60 A1.7,1.7 0 1 0 17.10,17.60 A1.7,1.7 0 1 0 20.50,17.60Z" fill="url(#gg)" fill-rule="evenodd"/></svg><span class="c" style="left:32px;transform:scaleX(0.926)">BluetoothUserService_a1...</span><span class="c" style="left:278px;transform:scaleX(0.968)">7444</span><span class="c" style="left:353px;transform:scaleX(0.982)">Servizio di supporto utente Bluetooth_a18e2</span><span class="c" style="left:929px;transform:scaleX(0.951)">In esecuzione</span><span class="c" style="left:1079px;transform:scaleX(0.993)">BthAppGroup</span></div><div class="row" style="top:655px"><svg class="g" width="26" height="26" viewBox="0 0 26 26"><path d="M9.50,2.10 L10.87,-0.00 L12.20,0.29 L12.57,2.77 L13.50,3.27 L15.79,2.24 L16.76,3.21 L15.73,5.50 L16.23,6.43 L18.71,6.80 L19.00,8.13 L16.90,9.50 L16.82,10.55 L18.71,12.20 L18.23,13.49 L15.73,13.50 L15.09,14.35 L15.79,16.76 L14.69,17.58 L12.57,16.23 L11.58,16.60 L10.87,19.00 L9.50,19.10 L8.45,16.82 L7.42,16.60 L5.51,18.23 L4.31,17.58 L4.65,15.09 L3.91,14.35 L1.42,14.69 L0.77,13.49 L2.40,11.58 L2.18,10.55 L-0.10,9.50 L-0.00,8.13 L2.40,7.42 L2.77,6.43 L1.42,4.31 L2.24,3.21 L4.65,3.91 L5.50,3.27 L5.51,0.77 L6.80,0.29 L8.45,2.18Z M13.80,9.50 A4.3,4.3 0 1 0 5.20,9.50 A4.3,4.3 0 1 0 13.80,9.50Z" fill="url(#gg)" fill-rule="evenodd"/><path d="M18.80,14.10 L19.89,12.82 L20.93,13.19 L20.98,14.86 L21.54,15.42 L23.21,15.47 L23.58,16.51 L22.30,17.60 L22.21,18.38 L23.21,19.73 L22.63,20.66 L20.98,20.34 L20.32,20.75 L19.89,22.38 L18.80,22.50 L18.02,21.01 L17.28,20.75 L15.74,21.43 L14.97,20.66 L15.65,19.12 L15.39,18.38 L13.90,17.60 L14.02,16.51 L15.65,16.08 L16.06,15.42 L15.74,13.77 L16.67,13.19 L18.02,14.19Z M20.50,17.60 A1.7,1.7 0 1 0 17.10,17.60 A1.7,1.7 0 1 0 20.50,17.60Z" fill="url(#gg)" fill-rule="evenodd"/></svg><span class="c" style="left:32px;transform:scaleX(0.982)">BrokerInfrastructure</span><span class="c" style="left:278px;transform:scaleX(0.968)">1008</span><span class="c" style="left:353px;transform:scaleX(0.994)">Servizio infrastruttura attività in background</span><span class="c" style="left:929px;transform:scaleX(0.951)">In esecuzione</span><span class="c" style="left:1079px;transform:scaleX(0.968)">DcomLaunch</span></div><div class="row" style="top:687px"><svg class="g" width="26" height="26" viewBox="0 0 26 26"><path d="M9.50,2.10 L10.87,-0.00 L12.20,0.29 L12.57,2.77 L13.50,3.27 L15.79,2.24 L16.76,3.21 L15.73,5.50 L16.23,6.43 L18.71,6.80 L19.00,8.13 L16.90,9.50 L16.82,10.55 L18.71,12.20 L18.23,13.49 L15.73,13.50 L15.09,14.35 L15.79,16.76 L14.69,17.58 L12.57,16.23 L11.58,16.60 L10.87,19.00 L9.50,19.10 L8.45,16.82 L7.42,16.60 L5.51,18.23 L4.31,17.58 L4.65,15.09 L3.91,14.35 L1.42,14.69 L0.77,13.49 L2.40,11.58 L2.18,10.55 L-0.10,9.50 L-0.00,8.13 L2.40,7.42 L2.77,6.43 L1.42,4.31 L2.24,3.21 L4.65,3.91 L5.50,3.27 L5.51,0.77 L6.80,0.29 L8.45,2.18Z M13.80,9.50 A4.3,4.3 0 1 0 5.20,9.50 A4.3,4.3 0 1 0 13.80,9.50Z" fill="url(#gg)" fill-rule="evenodd"/><path d="M18.80,14.10 L19.89,12.82 L20.93,13.19 L20.98,14.86 L21.54,15.42 L23.21,15.47 L23.58,16.51 L22.30,17.60 L22.21,18.38 L23.21,19.73 L22.63,20.66 L20.98,20.34 L20.32,20.75 L19.89,22.38 L18.80,22.50 L18.02,21.01 L17.28,20.75 L15.74,21.43 L14.97,20.66 L15.65,19.12 L15.39,18.38 L13.90,17.60 L14.02,16.51 L15.65,16.08 L16.06,15.42 L15.74,13.77 L16.67,13.19 L18.02,14.19Z M20.50,17.60 A1.7,1.7 0 1 0 17.10,17.60 A1.7,1.7 0 1 0 20.50,17.60Z" fill="url(#gg)" fill-rule="evenodd"/></svg><span class="c" style="left:32px;transform:scaleX(0.950)">Browser</span><span class="c" style="left:353px;transform:scaleX(0.987)">Browser di computer</span><span class="c" style="left:929px;transform:scaleX(0.989)">Arrestato</span><span class="c" style="left:1079px;transform:scaleX(0.933)">netsvcs</span></div><div class="row" style="top:719px"><svg class="g" width="26" height="26" viewBox="0 0 26 26"><path d="M9.50,2.10 L10.87,-0.00 L12.20,0.29 L12.57,2.77 L13.50,3.27 L15.79,2.24 L16.76,3.21 L15.73,5.50 L16.23,6.43 L18.71,6.80 L19.00,8.13 L16.90,9.50 L16.82,10.55 L18.71,12.20 L18.23,13.49 L15.73,13.50 L15.09,14.35 L15.79,16.76 L14.69,17.58 L12.57,16.23 L11.58,16.60 L10.87,19.00 L9.50,19.10 L8.45,16.82 L7.42,16.60 L5.51,18.23 L4.31,17.58 L4.65,15.09 L3.91,14.35 L1.42,14.69 L0.77,13.49 L2.40,11.58 L2.18,10.55 L-0.10,9.50 L-0.00,8.13 L2.40,7.42 L2.77,6.43 L1.42,4.31 L2.24,3.21 L4.65,3.91 L5.50,3.27 L5.51,0.77 L6.80,0.29 L8.45,2.18Z M13.80,9.50 A4.3,4.3 0 1 0 5.20,9.50 A4.3,4.3 0 1 0 13.80,9.50Z" fill="url(#gg)" fill-rule="evenodd"/><path d="M18.80,14.10 L19.89,12.82 L20.93,13.19 L20.98,14.86 L21.54,15.42 L23.21,15.47 L23.58,16.51 L22.30,17.60 L22.21,18.38 L23.21,19.73 L22.63,20.66 L20.98,20.34 L20.32,20.75 L19.89,22.38 L18.80,22.50 L18.02,21.01 L17.28,20.75 L15.74,21.43 L14.97,20.66 L15.65,19.12 L15.39,18.38 L13.90,17.60 L14.02,16.51 L15.65,16.08 L16.06,15.42 L15.74,13.77 L16.67,13.19 L18.02,14.19Z M20.50,17.60 A1.7,1.7 0 1 0 17.10,17.60 A1.7,1.7 0 1 0 20.50,17.60Z" fill="url(#gg)" fill-rule="evenodd"/></svg><span class="c" style="left:32px;transform:scaleX(0.928)">BTAGService</span><span class="c" style="left:278px;transform:scaleX(0.968)">1440</span><span class="c" style="left:353px;transform:scaleX(0.979)">Servizio gateway audio Bluetooth</span><span class="c" style="left:929px;transform:scaleX(0.951)">In esecuzione</span><span class="c" style="left:1079px;transform:scaleX(0.905)">LocalServiceN...</span></div><div class="row" style="top:751px"><svg class="g" width="26" height="26" viewBox="0 0 26 26"><path d="M9.50,2.10 L10.87,-0.00 L12.20,0.29 L12.57,2.77 L13.50,3.27 L15.79,2.24 L16.76,3.21 L15.73,5.50 L16.23,6.43 L18.71,6.80 L19.00,8.13 L16.90,9.50 L16.82,10.55 L18.71,12.20 L18.23,13.49 L15.73,13.50 L15.09,14.35 L15.79,16.76 L14.69,17.58 L12.57,16.23 L11.58,16.60 L10.87,19.00 L9.50,19.10 L8.45,16.82 L7.42,16.60 L5.51,18.23 L4.31,17.58 L4.65,15.09 L3.91,14.35 L1.42,14.69 L0.77,13.49 L2.40,11.58 L2.18,10.55 L-0.10,9.50 L-0.00,8.13 L2.40,7.42 L2.77,6.43 L1.42,4.31 L2.24,3.21 L4.65,3.91 L5.50,3.27 L5.51,0.77 L6.80,0.29 L8.45,2.18Z M13.80,9.50 A4.3,4.3 0 1 0 5.20,9.50 A4.3,4.3 0 1 0 13.80,9.50Z" fill="url(#gg)" fill-rule="evenodd"/><path d="M18.80,14.10 L19.89,12.82 L20.93,13.19 L20.98,14.86 L21.54,15.42 L23.21,15.47 L23.58,16.51 L22.30,17.60 L22.21,18.38 L23.21,19.73 L22.63,20.66 L20.98,20.34 L20.32,20.75 L19.89,22.38 L18.80,22.50 L18.02,21.01 L17.28,20.75 L15.74,21.43 L14.97,20.66 L15.65,19.12 L15.39,18.38 L13.90,17.60 L14.02,16.51 L15.65,16.08 L16.06,15.42 L15.74,13.77 L16.67,13.19 L18.02,14.19Z M20.50,17.60 A1.7,1.7 0 1 0 17.10,17.60 A1.7,1.7 0 1 0 20.50,17.60Z" fill="url(#gg)" fill-rule="evenodd"/></svg></div>
  <div class="lbar"></div>
  <div id="sb"><div id="thumb"></div></div>
  <div class="bbar"></div>
</div>
<div id="menu">
  <div class="t mi" style="left:54.5px;top:12.79px;font-size:17.73px;transform:scaleX(0.938);transform-origin:0 0;">Avvia</div><div class="t mi dis" style="left:54.5px;top:47.79px;font-size:17.73px;transform:scaleX(0.945);transform-origin:0 0;">Arresta</div><div class="t mi dis" style="left:54.5px;top:82.79px;font-size:17.73px;transform:scaleX(0.903);transform-origin:0 0;">Riavvia</div><div class="t mi" style="left:54.5px;top:128.89px;font-size:17.73px;transform:scaleX(0.950);transform-origin:0 0;">Apri servizi</div><div class="t mi" style="left:54.5px;top:163.89px;font-size:17.73px;transform:scaleX(0.944);transform-origin:0 0;">Cerca online</div><div class="t mi dis" style="left:54.5px;top:198.79px;font-size:17.73px;transform:scaleX(0.999);transform-origin:0 0;">Vai ai dettagli</div>
  <div class="abs" style="left:12px;top:112px;width:212px;height:1px;background:#d4d4d4"></div>
</div>
</body></html>
